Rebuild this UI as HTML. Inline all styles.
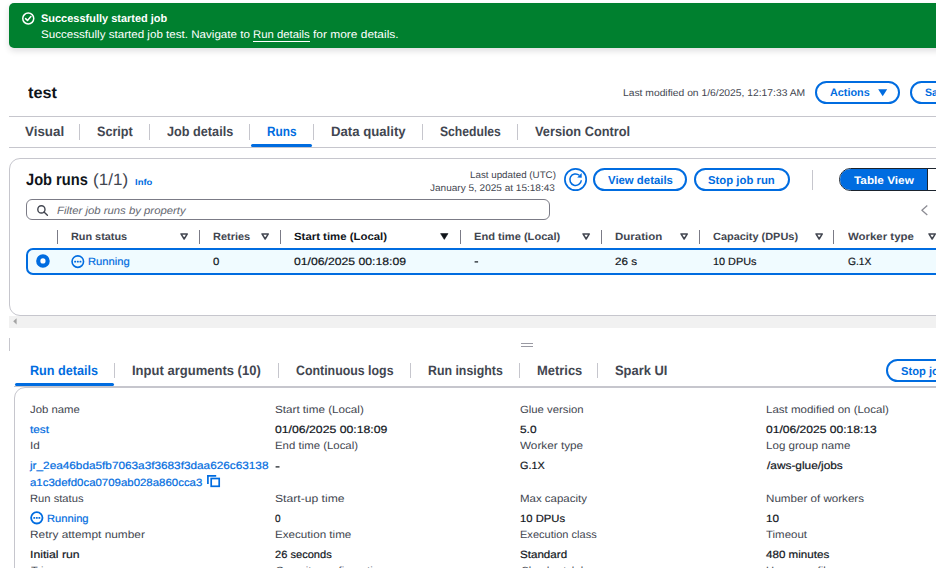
<!DOCTYPE html>
<html>
<head>
<meta charset="utf-8">
<title>test - AWS Glue Studio</title>
<style>
*{box-sizing:border-box;margin:0;padding:0}
html,body{width:936px;height:573px;overflow:hidden;background:#fff}
body{font-family:"Liberation Sans",sans-serif;color:#0f141a;position:relative}
.a{position:absolute}
.t{position:absolute;white-space:nowrap;line-height:20px;transform-origin:0 0;text-rendering:geometricPrecision}
.pill{position:absolute;border:2px solid #006ce0;border-radius:12px;background:#fff}
.hl{position:absolute;height:1px;background:#c6c6cd}
.vs{position:absolute;width:1px;background:#c6c6cd}
.hs{position:absolute;width:1px;background:#7b7b86;top:229.5px;height:14px}
.ul{position:absolute;height:3px;background:#006ce0;border-radius:1.5px}
.box{position:absolute;border:1px solid #c6c6cd;border-radius:11px;background:#fff}
svg{position:absolute;overflow:visible}
</style>
</head>
<body>

<!-- flash banner -->
<div class="a" style="left:9px;top:3px;width:960px;height:45.4px;background:#00802f;border-radius:5px;box-shadow:0 3px 6px rgba(0,7,22,.13)"></div>
<svg style="left:21px;top:11px" width="15" height="15" viewBox="0 0 15 15"><circle cx="7.25" cy="7.5" r="5.5" fill="none" stroke="#fff" stroke-width="1.5"/><path d="M4.6 7.6 L6.5 9.5 L9.9 5.6" fill="none" stroke="#fff" stroke-width="1.5" stroke-linecap="round" stroke-linejoin="round"/></svg>
<div class="a" style="left:253px;top:40.5px;width:57px;height:1px;background:#fff"></div>

<!-- header buttons -->
<div class="pill" style="left:815.3px;top:81px;width:85px;height:23px"></div>
<svg style="left:878px;top:89px" width="10" height="8" viewBox="0 0 10 8"><path d="M0.2 0.2 H9.2 L4.7 7.2 Z" fill="#006ce0"/></svg>
<div class="pill" style="left:910px;top:81px;width:70px;height:23px"></div>

<div class="hl" style="left:9px;top:116px;width:927px"></div>

<!-- top tabs -->
<div class="vs" style="left:79.2px;top:124px;height:15.5px"></div>
<div class="vs" style="left:148.8px;top:124px;height:15.5px"></div>
<div class="vs" style="left:249px;top:124px;height:15.5px"></div>
<div class="vs" style="left:313px;top:124px;height:15.5px"></div>
<div class="vs" style="left:422px;top:124px;height:15.5px"></div>
<div class="vs" style="left:517px;top:124px;height:15.5px"></div>
<div class="hl" style="left:9px;top:147px;width:927px"></div>
<div class="ul" style="left:251.3px;top:144.2px;width:61px"></div>

<!-- job runs container -->
<div class="box" style="left:9px;top:157.6px;width:960px;height:158px"></div>
<svg style="left:563.7px;top:167.9px" width="23" height="23" viewBox="0 0 23 23"><circle cx="11.55" cy="11.5" r="10.65" fill="#fff" stroke="#006ce0" stroke-width="1.7"/><path d="M17.33 12.2 A5.75 5.75 0 1 1 15.3 7.3" fill="none" stroke="#006ce0" stroke-width="1.5"/><path d="M17.7 5.1 V9.85 L13.2 9.4 Z" fill="#006ce0"/></svg>
<div class="pill" style="left:593px;top:168.2px;width:94px;height:22.6px"></div>
<div class="pill" style="left:694.3px;top:168.2px;width:95.6px;height:22.6px"></div>
<div class="vs" style="left:812px;top:170px;height:20px"></div>
<div class="a" style="left:839px;top:168px;width:120px;height:23px;border:1px solid #1b232d;border-radius:11.5px;background:#fff;overflow:hidden"><div class="a" style="left:0;top:0;width:87px;height:21px;background:#006ce0;border-right:1.5px solid #1b232d;box-sizing:content-box"></div></div>

<!-- filter -->
<div class="a" style="left:26.2px;top:198.8px;width:524px;height:21.6px;border:1px solid #7b7b86;border-radius:6px;background:#fff"></div>
<svg style="left:37px;top:205px" width="12" height="11" viewBox="0 0 12 11"><circle cx="4.4" cy="4.4" r="3.6" fill="none" stroke="#424650" stroke-width="1.4"/><path d="M7 7 L10.4 10.2" stroke="#424650" stroke-width="1.4" stroke-linecap="round"/></svg>
<svg style="left:921px;top:204.5px" width="8" height="11" viewBox="0 0 8 11"><path d="M6.3 0.5 L0.9 5.2 L6.3 9.9" fill="none" stroke="#8c8c94" stroke-width="1.3" stroke-linejoin="round"/></svg>

<!-- table header separators -->
<div class="hs" style="left:57.3px"></div>
<div class="hs" style="left:198.8px"></div>
<div class="hs" style="left:279.5px"></div>
<div class="hs" style="left:459.5px"></div>
<div class="hs" style="left:601px"></div>
<div class="hs" style="left:698.5px"></div>
<div class="hs" style="left:833.2px"></div>
<!-- sort triangles -->
<svg style="left:180px;top:233.1px" width="9" height="7" viewBox="0 0 9 7"><path d="M1 0.9 H7.3 L4.15 6 Z" fill="none" stroke="#424650" stroke-width="1.5" stroke-linejoin="round"/></svg>
<svg style="left:260.75px;top:233.1px" width="9" height="7" viewBox="0 0 9 7"><path d="M1 0.9 H7.3 L4.15 6 Z" fill="none" stroke="#424650" stroke-width="1.5" stroke-linejoin="round"/></svg>
<svg style="left:440px;top:233.1px" width="9" height="7" viewBox="0 0 9 7"><path d="M0.6 0.6 H8 L4.3 6.4 Z" fill="#0f141a" stroke="#0f141a" stroke-width=".6" stroke-linejoin="round"/></svg>
<svg style="left:581.75px;top:233.1px" width="9" height="7" viewBox="0 0 9 7"><path d="M1 0.9 H7.3 L4.15 6 Z" fill="none" stroke="#424650" stroke-width="1.5" stroke-linejoin="round"/></svg>
<svg style="left:679.5px;top:233.1px" width="9" height="7" viewBox="0 0 9 7"><path d="M1 0.9 H7.3 L4.15 6 Z" fill="none" stroke="#424650" stroke-width="1.5" stroke-linejoin="round"/></svg>
<svg style="left:814.6px;top:233.1px" width="9" height="7" viewBox="0 0 9 7"><path d="M1 0.9 H7.3 L4.15 6 Z" fill="none" stroke="#424650" stroke-width="1.5" stroke-linejoin="round"/></svg>
<svg style="left:928px;top:233.1px" width="9" height="7" viewBox="0 0 9 7"><path d="M1 0.9 H7.3 L4.15 6 Z" fill="none" stroke="#424650" stroke-width="1.5" stroke-linejoin="round"/></svg>

<!-- selected row -->
<div class="a" style="left:26.2px;top:248px;width:940px;height:27px;background:#f0fbff;border:2px solid #006ce0;border-radius:7px"></div>
<svg style="left:36px;top:254.1px" width="14" height="14" viewBox="0 0 14 14"><circle cx="6.95" cy="6.95" r="4.7" fill="#fff" stroke="#006ce0" stroke-width="4.2"/></svg>
<svg style="left:71px;top:254.6px" width="14" height="14" viewBox="0 0 14 14"><circle cx="6.8" cy="6.6" r="5.75" fill="none" stroke="#006ce0" stroke-width="1.6"/><rect x="3.2" y="5.7" width="1.9" height="1.8" rx=".5" fill="#006ce0"/><rect x="5.85" y="5.7" width="1.9" height="1.8" rx=".5" fill="#006ce0"/><rect x="8.5" y="5.7" width="1.9" height="1.8" rx=".5" fill="#006ce0"/></svg>
<svg style="left:474px;top:260px" width="6" height="4" viewBox="0 0 6 4"><path d="M0.6 1.9 H4.1" stroke="#0f141a" stroke-width="1.2"/></svg>

<!-- horizontal scrollbar -->
<div class="a" style="left:9px;top:315.6px;width:927px;height:12px;background:#f1f1f1"></div>
<svg style="left:13px;top:318px" width="4" height="7" viewBox="0 0 4 7"><path d="M3.6 0.2 V6.4 L0.2 3.3 Z" fill="#a3a3a3"/></svg>

<!-- split handle -->
<div class="vs" style="left:9px;top:337.5px;height:13px"></div>
<div class="a" style="left:521.3px;top:342.8px;width:12px;height:1px;background:#9a9aa3"></div>
<div class="a" style="left:521.3px;top:345.8px;width:12px;height:1px;background:#9a9aa3"></div>

<!-- lower tabs -->
<div class="vs" style="left:114.2px;top:362.5px;height:15.8px"></div>
<div class="vs" style="left:277.8px;top:362.5px;height:15.8px"></div>
<div class="vs" style="left:409.5px;top:362.5px;height:15.8px"></div>
<div class="vs" style="left:519px;top:362.5px;height:15.8px"></div>
<div class="vs" style="left:597.3px;top:362.5px;height:15.8px"></div>
<div class="pill" style="left:885.7px;top:359px;width:100px;height:22.7px"></div>
<div class="hl" style="left:14px;top:386px;width:922px"></div>
<div class="ul" style="left:14.5px;top:382.6px;width:99.8px"></div>

<!-- details container -->
<div class="box" style="left:13.6px;top:387.2px;width:960px;height:300px"></div>
<svg style="left:207.4px;top:475.4px" width="14" height="13" viewBox="0 0 14 13"><path d="M0.9 9 V0.9 H9.2" fill="none" stroke="#006ce0" stroke-width="1.7"/><rect x="4.2" y="3.5" width="8" height="7.8" fill="#fff" stroke="#006ce0" stroke-width="1.7"/></svg>
<svg style="left:29.6px;top:510.8px" width="14" height="14" viewBox="0 0 14 14"><circle cx="6.8" cy="6.8" r="5.7" fill="none" stroke="#006ce0" stroke-width="1.8"/><rect x="3.3" y="5.9" width="1.9" height="1.8" rx=".5" fill="#006ce0"/><rect x="5.85" y="5.9" width="1.9" height="1.8" rx=".5" fill="#006ce0"/><rect x="8.4" y="5.9" width="1.9" height="1.8" rx=".5" fill="#006ce0"/></svg>
<svg style="left:275px;top:464.6px" width="6" height="4" viewBox="0 0 6 4"><path d="M0.6 1.9 H4.5" stroke="#0f141a" stroke-width="1.2"/></svg>

<div class="t" style="left:40.50px;top:9px;font-size:11px;color:#fff;transform:scaleX(0.9975);font-weight:bold;">Successfully started job</div>
<div class="t" style="left:40.50px;top:25px;font-size:11px;color:#fff;transform:scaleX(1.0544);">Successfully started job test. Navigate to</div>
<div class="t" style="left:253.25px;top:25px;font-size:11px;color:#fff;transform:scaleX(1.0310);">Run details</div>
<div class="t" style="left:313.00px;top:25px;font-size:11px;color:#fff;transform:scaleX(1.0850);">for more details.</div>
<div class="t" style="left:27.75px;top:84px;font-size:16px;color:#0f141a;transform:scaleX(1.0141);font-weight:bold;">test</div>
<div class="t" style="left:623.00px;top:84px;font-size:9.8px;color:#424650;transform:scaleX(1.0514);">Last modified on 1/6/2025, 12:17:33 AM</div>
<div class="t" style="left:830.10px;top:83px;font-size:10.8px;color:#006ce0;transform:scaleX(1.0028);font-weight:bold;">Actions</div>
<div class="t" style="left:925.30px;top:83px;font-size:10.8px;color:#006ce0;transform:scaleX(0.9797);font-weight:bold;">Save</div>
<div class="t" style="left:24.80px;top:122px;font-size:13.6px;color:#424650;transform:scaleX(0.9837);font-weight:bold;">Visual</div>
<div class="t" style="left:96.60px;top:122px;font-size:13.6px;color:#424650;transform:scaleX(0.9284);font-weight:bold;">Script</div>
<div class="t" style="left:166.90px;top:122px;font-size:13.6px;color:#424650;transform:scaleX(0.9326);font-weight:bold;">Job details</div>
<div class="t" style="left:267.40px;top:122px;font-size:13.6px;color:#006ce0;transform:scaleX(0.8706);font-weight:bold;">Runs</div>
<div class="t" style="left:330.90px;top:122px;font-size:13.6px;color:#424650;transform:scaleX(0.9679);font-weight:bold;">Data quality</div>
<div class="t" style="left:440.00px;top:122px;font-size:13.6px;color:#424650;transform:scaleX(0.8942);font-weight:bold;">Schedules</div>
<div class="t" style="left:535.10px;top:122px;font-size:13.6px;color:#424650;transform:scaleX(0.9399);font-weight:bold;">Version Control</div>
<div class="t" style="left:26.30px;top:170px;font-size:16.4px;color:#0f141a;transform:scaleX(0.8930);font-weight:bold;">Job runs</div>
<div class="t" style="left:92.93px;top:170px;font-size:16.4px;color:#424650;transform:scaleX(1.0403);">(1/1)</div>
<div class="t" style="left:135.00px;top:172px;font-size:8.6px;color:#006ce0;transform:scaleX(1.1003);font-weight:bold;">Info</div>
<div class="t" style="left:469.50px;top:166px;font-size:9.6px;color:#424650;transform:scaleX(1.0201);">Last updated (UTC)</div>
<div class="t" style="left:429.50px;top:179px;font-size:9.6px;color:#424650;transform:scaleX(1.0449);">January 5, 2025 at 15:18:43</div>
<div class="t" style="left:608.00px;top:171px;font-size:11.5px;color:#006ce0;transform:scaleX(0.9888);font-weight:bold;">View details</div>
<div class="t" style="left:707.75px;top:171px;font-size:11.5px;color:#006ce0;transform:scaleX(0.9861);font-weight:bold;">Stop job run</div>
<div class="t" style="left:853.50px;top:171px;font-size:11px;color:#fff;transform:scaleX(1.0715);font-weight:bold;">Table View</div>
<div class="t" style="left:57.00px;top:201px;font-size:10.5px;color:#656871;transform:scaleX(1.0810);font-style:italic;">Filter job runs by property</div>
<div class="t" style="left:70.75px;top:227px;font-size:10.5px;color:#424650;transform:scaleX(1.0338);font-weight:bold;">Run status</div>
<div class="t" style="left:213.25px;top:227px;font-size:10.5px;color:#424650;transform:scaleX(1.0418);font-weight:bold;">Retries</div>
<div class="t" style="left:294.25px;top:227px;font-size:10.5px;color:#0f141a;transform:scaleX(1.0848);font-weight:bold;">Start time (Local)</div>
<div class="t" style="left:474.25px;top:227px;font-size:10.5px;color:#424650;transform:scaleX(1.0563);font-weight:bold;">End time (Local)</div>
<div class="t" style="left:614.75px;top:227px;font-size:10.5px;color:#424650;transform:scaleX(1.0934);font-weight:bold;">Duration</div>
<div class="t" style="left:713.00px;top:227px;font-size:10.5px;color:#424650;transform:scaleX(1.0408);font-weight:bold;">Capacity (DPUs)</div>
<div class="t" style="left:848.30px;top:227px;font-size:10.5px;color:#424650;transform:scaleX(1.0882);font-weight:bold;">Worker type</div>
<div class="t" style="left:88.00px;top:252px;font-size:10.5px;color:#006ce0;transform:scaleX(1.0694);-webkit-text-stroke:0.18px currentColor;">Running</div>
<div class="t" style="left:213.00px;top:252px;font-size:10.5px;color:#0f141a;transform:scaleX(1.0833);-webkit-text-stroke:0.18px currentColor;">0</div>
<div class="t" style="left:294.25px;top:252px;font-size:10.5px;color:#0f141a;transform:scaleX(1.1632);-webkit-text-stroke:0.18px currentColor;">01/06/2025 00:18:09</div>
<div class="t" style="left:614.75px;top:252px;font-size:10.5px;color:#0f141a;transform:scaleX(1.1093);-webkit-text-stroke:0.18px currentColor;">26 s</div>
<div class="t" style="left:713.00px;top:252px;font-size:10.5px;color:#0f141a;transform:scaleX(1.0355);-webkit-text-stroke:0.18px currentColor;">10 DPUs</div>
<div class="t" style="left:848.30px;top:252px;font-size:10.5px;color:#0f141a;transform:scaleX(0.9781);-webkit-text-stroke:0.18px currentColor;">G.1X</div>
<div class="t" style="left:29.50px;top:361px;font-size:13.6px;color:#006ce0;transform:scaleX(0.9284);font-weight:bold;">Run details</div>
<div class="t" style="left:131.50px;top:361px;font-size:13.6px;color:#424650;transform:scaleX(0.9577);font-weight:bold;">Input arguments (10)</div>
<div class="t" style="left:296.25px;top:361px;font-size:13.6px;color:#424650;transform:scaleX(0.9094);font-weight:bold;">Continuous logs</div>
<div class="t" style="left:428.25px;top:361px;font-size:13.6px;color:#424650;transform:scaleX(0.9082);font-weight:bold;">Run insights</div>
<div class="t" style="left:536.50px;top:361px;font-size:13.6px;color:#424650;transform:scaleX(0.9512);font-weight:bold;">Metrics</div>
<div class="t" style="left:615.40px;top:361px;font-size:13.6px;color:#424650;transform:scaleX(0.9508);font-weight:bold;">Spark UI</div>
<div class="t" style="left:900.80px;top:362px;font-size:11.5px;color:#006ce0;transform:scaleX(0.9707);font-weight:bold;">Stop job run</div>
<div class="t" style="left:29.50px;top:400px;font-size:10.5px;color:#424650;transform:scaleX(1.0806);">Job name</div>
<div class="t" style="left:29.50px;top:420px;font-size:10.5px;color:#006ce0;transform:scaleX(1.1172);-webkit-text-stroke:0.18px currentColor;">test</div>
<div class="t" style="left:29.50px;top:436px;font-size:10.5px;color:#424650;transform:scaleX(1.1214);">Id</div>
<div class="t" style="left:29.62px;top:456px;font-size:10.5px;color:#006ce0;transform:scaleX(1.1219);-webkit-text-stroke:0.18px currentColor;">jr_2ea46bda5fb7063a3f3683f3daa626c63138</div>
<div class="t" style="left:29.50px;top:473px;font-size:10.5px;color:#006ce0;transform:scaleX(1.0891);-webkit-text-stroke:0.18px currentColor;">a1c3defd0ca0709ab028a860cca3</div>
<div class="t" style="left:29.50px;top:489px;font-size:10.5px;color:#424650;transform:scaleX(1.0662);">Run status</div>
<div class="t" style="left:47.00px;top:509px;font-size:10.5px;color:#006ce0;transform:scaleX(1.0630);-webkit-text-stroke:0.18px currentColor;">Running</div>
<div class="t" style="left:29.50px;top:525px;font-size:10.5px;color:#424650;transform:scaleX(1.1319);">Retry attempt number</div>
<div class="t" style="left:29.50px;top:545px;font-size:10.5px;color:#0f141a;transform:scaleX(1.1632);-webkit-text-stroke:0.18px currentColor;">Initial run</div>
<div class="t" style="left:30.50px;top:561px;font-size:10.5px;color:#424650;transform:scaleX(1.0529);">Trigger name</div>
<div class="t" style="left:274.50px;top:400px;font-size:10.5px;color:#424650;transform:scaleX(1.1109);">Start time (Local)</div>
<div class="t" style="left:274.50px;top:420px;font-size:10.5px;color:#0f141a;transform:scaleX(1.1658);-webkit-text-stroke:0.18px currentColor;">01/06/2025 00:18:09</div>
<div class="t" style="left:274.50px;top:436px;font-size:10.5px;color:#424650;transform:scaleX(1.0862);">End time (Local)</div>
<div class="t" style="left:274.50px;top:489px;font-size:10.5px;color:#424650;transform:scaleX(1.1574);">Start-up time</div>
<div class="t" style="left:274.50px;top:509px;font-size:10.5px;color:#0f141a;transform:scaleX(0.9583);-webkit-text-stroke:0.18px currentColor;">0</div>
<div class="t" style="left:274.50px;top:525px;font-size:10.5px;color:#424650;transform:scaleX(1.1084);">Execution time</div>
<div class="t" style="left:274.50px;top:545px;font-size:10.5px;color:#0f141a;transform:scaleX(1.0570);-webkit-text-stroke:0.18px currentColor;">26 seconds</div>
<div class="t" style="left:275.50px;top:561px;font-size:10.5px;color:#424650;transform:scaleX(1.0828);">Security configuration</div>
<div class="t" style="left:519.50px;top:400px;font-size:10.5px;color:#424650;transform:scaleX(1.0785);">Glue version</div>
<div class="t" style="left:519.50px;top:420px;font-size:10.5px;color:#0f141a;transform:scaleX(1.1340);-webkit-text-stroke:0.18px currentColor;">5.0</div>
<div class="t" style="left:519.50px;top:436px;font-size:10.5px;color:#424650;transform:scaleX(1.1182);">Worker type</div>
<div class="t" style="left:519.50px;top:456px;font-size:10.5px;color:#0f141a;transform:scaleX(1.0341);-webkit-text-stroke:0.18px currentColor;">G.1X</div>
<div class="t" style="left:519.50px;top:489px;font-size:10.5px;color:#424650;transform:scaleX(1.0927);">Max capacity</div>
<div class="t" style="left:519.50px;top:509px;font-size:10.5px;color:#0f141a;transform:scaleX(1.0713);-webkit-text-stroke:0.18px currentColor;">10 DPUs</div>
<div class="t" style="left:519.50px;top:525px;font-size:10.5px;color:#424650;transform:scaleX(1.0522);">Execution class</div>
<div class="t" style="left:519.50px;top:545px;font-size:10.5px;color:#0f141a;transform:scaleX(1.1047);-webkit-text-stroke:0.18px currentColor;">Standard</div>
<div class="t" style="left:520.50px;top:561px;font-size:10.5px;color:#424650;transform:scaleX(1.0353);">Cloudwatch logs</div>
<div class="t" style="left:766.00px;top:400px;font-size:10.5px;color:#424650;transform:scaleX(1.0958);">Last modified on (Local)</div>
<div class="t" style="left:766.00px;top:420px;font-size:10.5px;color:#0f141a;transform:scaleX(1.1502);-webkit-text-stroke:0.18px currentColor;">01/06/2025 00:18:13</div>
<div class="t" style="left:766.00px;top:436px;font-size:10.5px;color:#424650;transform:scaleX(1.1027);">Log group name</div>
<div class="t" style="left:767.00px;top:456px;font-size:10.5px;color:#0f141a;transform:scaleX(1.1294);-webkit-text-stroke:0.18px currentColor;">/aws-glue/jobs</div>
<div class="t" style="left:766.00px;top:489px;font-size:10.5px;color:#424650;transform:scaleX(1.1053);">Number of workers</div>
<div class="t" style="left:766.00px;top:509px;font-size:10.5px;color:#0f141a;transform:scaleX(1.1209);-webkit-text-stroke:0.18px currentColor;">10</div>
<div class="t" style="left:766.00px;top:525px;font-size:10.5px;color:#424650;transform:scaleX(1.0904);">Timeout</div>
<div class="t" style="left:766.00px;top:545px;font-size:10.5px;color:#0f141a;transform:scaleX(1.1065);-webkit-text-stroke:0.18px currentColor;">480 minutes</div>
<div class="t" style="left:766.00px;top:561px;font-size:10.5px;color:#424650;transform:scaleX(1.0640);">Usage profile</div>

<!-- bottom crop strip -->
<div class="a" style="left:0;top:568px;width:936px;height:5px;background:#fff"></div>
</body>
</html>
